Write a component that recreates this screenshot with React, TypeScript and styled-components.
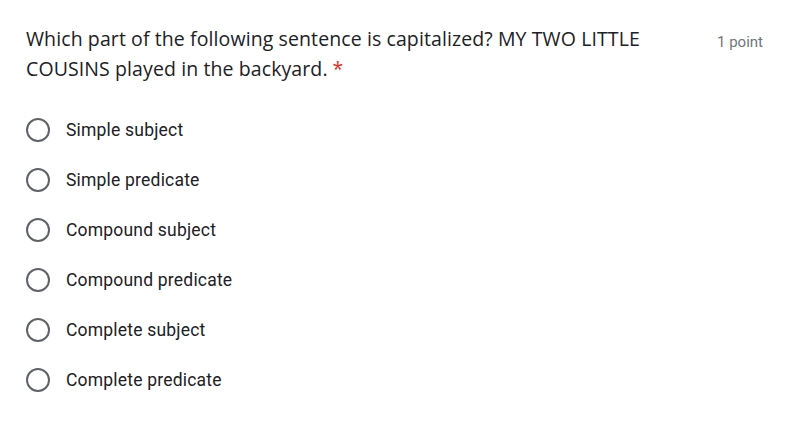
import React from 'react';
import styled, { createGlobalStyle } from 'styled-components';

const GlobalStyle = createGlobalStyle`
  html, body {
    margin: 0;
    padding: 0;
    background: #fff;
  }
`;

const Card = styled.div`
  width: 791px;
  height: 425px;
  box-sizing: border-box;
  padding: 24px 28px 0 26px;
  background: #fff;
  font-family: Roboto, 'Liberation Sans', sans-serif;
`;

const Header = styled.div`
  display: flex;
  align-items: flex-start;
  justify-content: space-between;
`;

const Question = styled.div`
  width: 660px;
  font-family: 'Open Sans', 'Liberation Sans', sans-serif;
  font-size: 19.5px;
  line-height: 30px;
  color: #202124;
  letter-spacing: 0.1px;
`;

const Required = styled.span`
  color: #d93025;
  margin-left: 5px;
`;

const Points = styled.div`
  font-size: 15px;
  line-height: 20px;
  color: #70757a;
  padding-top: 8px;
`;

const Options = styled.div`
  display: flex;
  flex-direction: column;
  margin-top: 21px;
`;

const Option = styled.label`
  display: flex;
  align-items: center;
  height: 50px;
  gap: 16px;
`;

const Radio = styled.span`
  width: 20px;
  height: 20px;
  border: 2px solid #5f6368;
  border-radius: 50%;
  flex: none;
`;

const OptionText = styled.span`
  font-size: 17.5px;
  color: #202124;
  letter-spacing: 0.2px;
`;

const options = [
  'Simple subject',
  'Simple predicate',
  'Compound subject',
  'Compound predicate',
  'Complete subject',
  'Complete predicate',
];

export default function App() {
  return (
    <>
      <GlobalStyle />
      <Card>
        <Header>
          <Question>
            Which part of the following sentence is capitalized? MY TWO LITTLE COUSINS played in the
            backyard.
            <Required>*</Required>
          </Question>
          <Points>1 point</Points>
        </Header>
        <Options>
          {options.map((o) => (
            <Option key={o}>
              <Radio />
              <OptionText>{o}</OptionText>
            </Option>
          ))}
        </Options>
      </Card>
    </>
  );
}
